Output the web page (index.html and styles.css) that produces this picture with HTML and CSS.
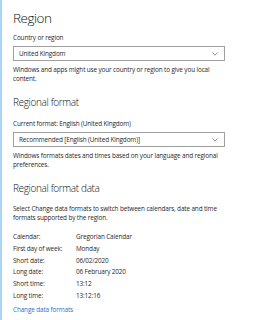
FILE: index.html
```html
<!DOCTYPE html>
<html lang="en">
<head>
  <meta charset="UTF-8" />
  <meta name="viewport" content="width=device-width, initial-scale=1" />
  <title>Region</title>
  <link rel="stylesheet" href="styles.css">
</head>
<body>
  <div class="page">
    <h1 class="title">Region</h1>

    <div class="label">Country or region</div>
    <div class="select">
      <span>United Kingdom</span>
      <svg class="chev" width="6" height="4" viewBox="0 0 6 4"><polyline points="0.5,0.5 3,3.2 5.5,0.5" fill="none" stroke="#777" stroke-width="0.8"/></svg>
    </div>
    <p class="desc">Windows and apps might use your country or region to give you local content.</p>

    <h2 class="subtitle">Regional format</h2>
    <div class="label">Current format: English (United Kingdom)</div>
    <div class="select">
      <span>Recommended [English (United Kingdom)]</span>
      <svg class="chev" width="6" height="4" viewBox="0 0 6 4"><polyline points="0.5,0.5 3,3.2 5.5,0.5" fill="none" stroke="#777" stroke-width="0.8"/></svg>
    </div>
    <p class="desc">Windows formats dates and times based on your language and regional preferences.</p>

    <h2 class="subtitle">Regional format data</h2>
    <p class="desc">Select Change data formats to switch between calendars, date and time formats supported by the region.</p>

    <div class="formats">
      <span>Calendar:</span><span>Gregorian Calendar</span>
      <span>First day of week:</span><span>Monday</span>
      <span>Short date:</span><span>06/02/2020</span>
      <span>Long date:</span><span>06 February 2020</span>
      <span>Short time:</span><span>13:12</span>
      <span>Long time:</span><span>13:12:16</span>
    </div>

    <a class="link" href="#">Change data formats</a>
  </div>
</body>
</html>
```

FILE: styles.css
```css
body {
  margin: 0;
  background: #fff;
  font-family: "Open Sans", "Noto Sans", sans-serif;
  color: #1f1f1f;
}

.page {
  min-height: 320px;
  box-sizing: border-box;
  border-left: 2px solid #a9d4f2;
  padding: 9px 0 0 11px;
  font-size: 6.4px;
  line-height: 9px;
  letter-spacing: -0.13px;
}

.title {
  margin: 0;
  font-size: 13.5px;
  font-weight: 300;
  line-height: 18px;
  letter-spacing: -0.5px;
  color: #111;
}

.subtitle {
  margin: 13px 0 0 0;
  font-size: 10px;
  font-weight: 300;
  line-height: 13px;
  letter-spacing: -0.35px;
  color: #111;
}

.label {
  margin-top: 6px;
}

.subtitle + .label {
  margin-top: 10px;
}

.select {
  margin-top: 4px;
  width: 212px;
  height: 15px;
  box-sizing: border-box;
  border: 1px solid #a0a0a0;
  padding: 0 6px 0 5px;
  display: flex;
  align-items: center;
  justify-content: space-between;
}

.chev {
  display: block;
}

.desc {
  margin: 4px 0 0 0;
  width: 212px;
}

.subtitle + .desc {
  margin-top: 9px;
}

.formats {
  margin-top: 9px;
  display: grid;
  grid-template-columns: 63px auto;
  grid-auto-rows: 11.7px;
  align-items: center;
}

.link {
  display: block;
  margin-top: 4px;
  color: #1a73cc;
  text-decoration: none;
}
```
